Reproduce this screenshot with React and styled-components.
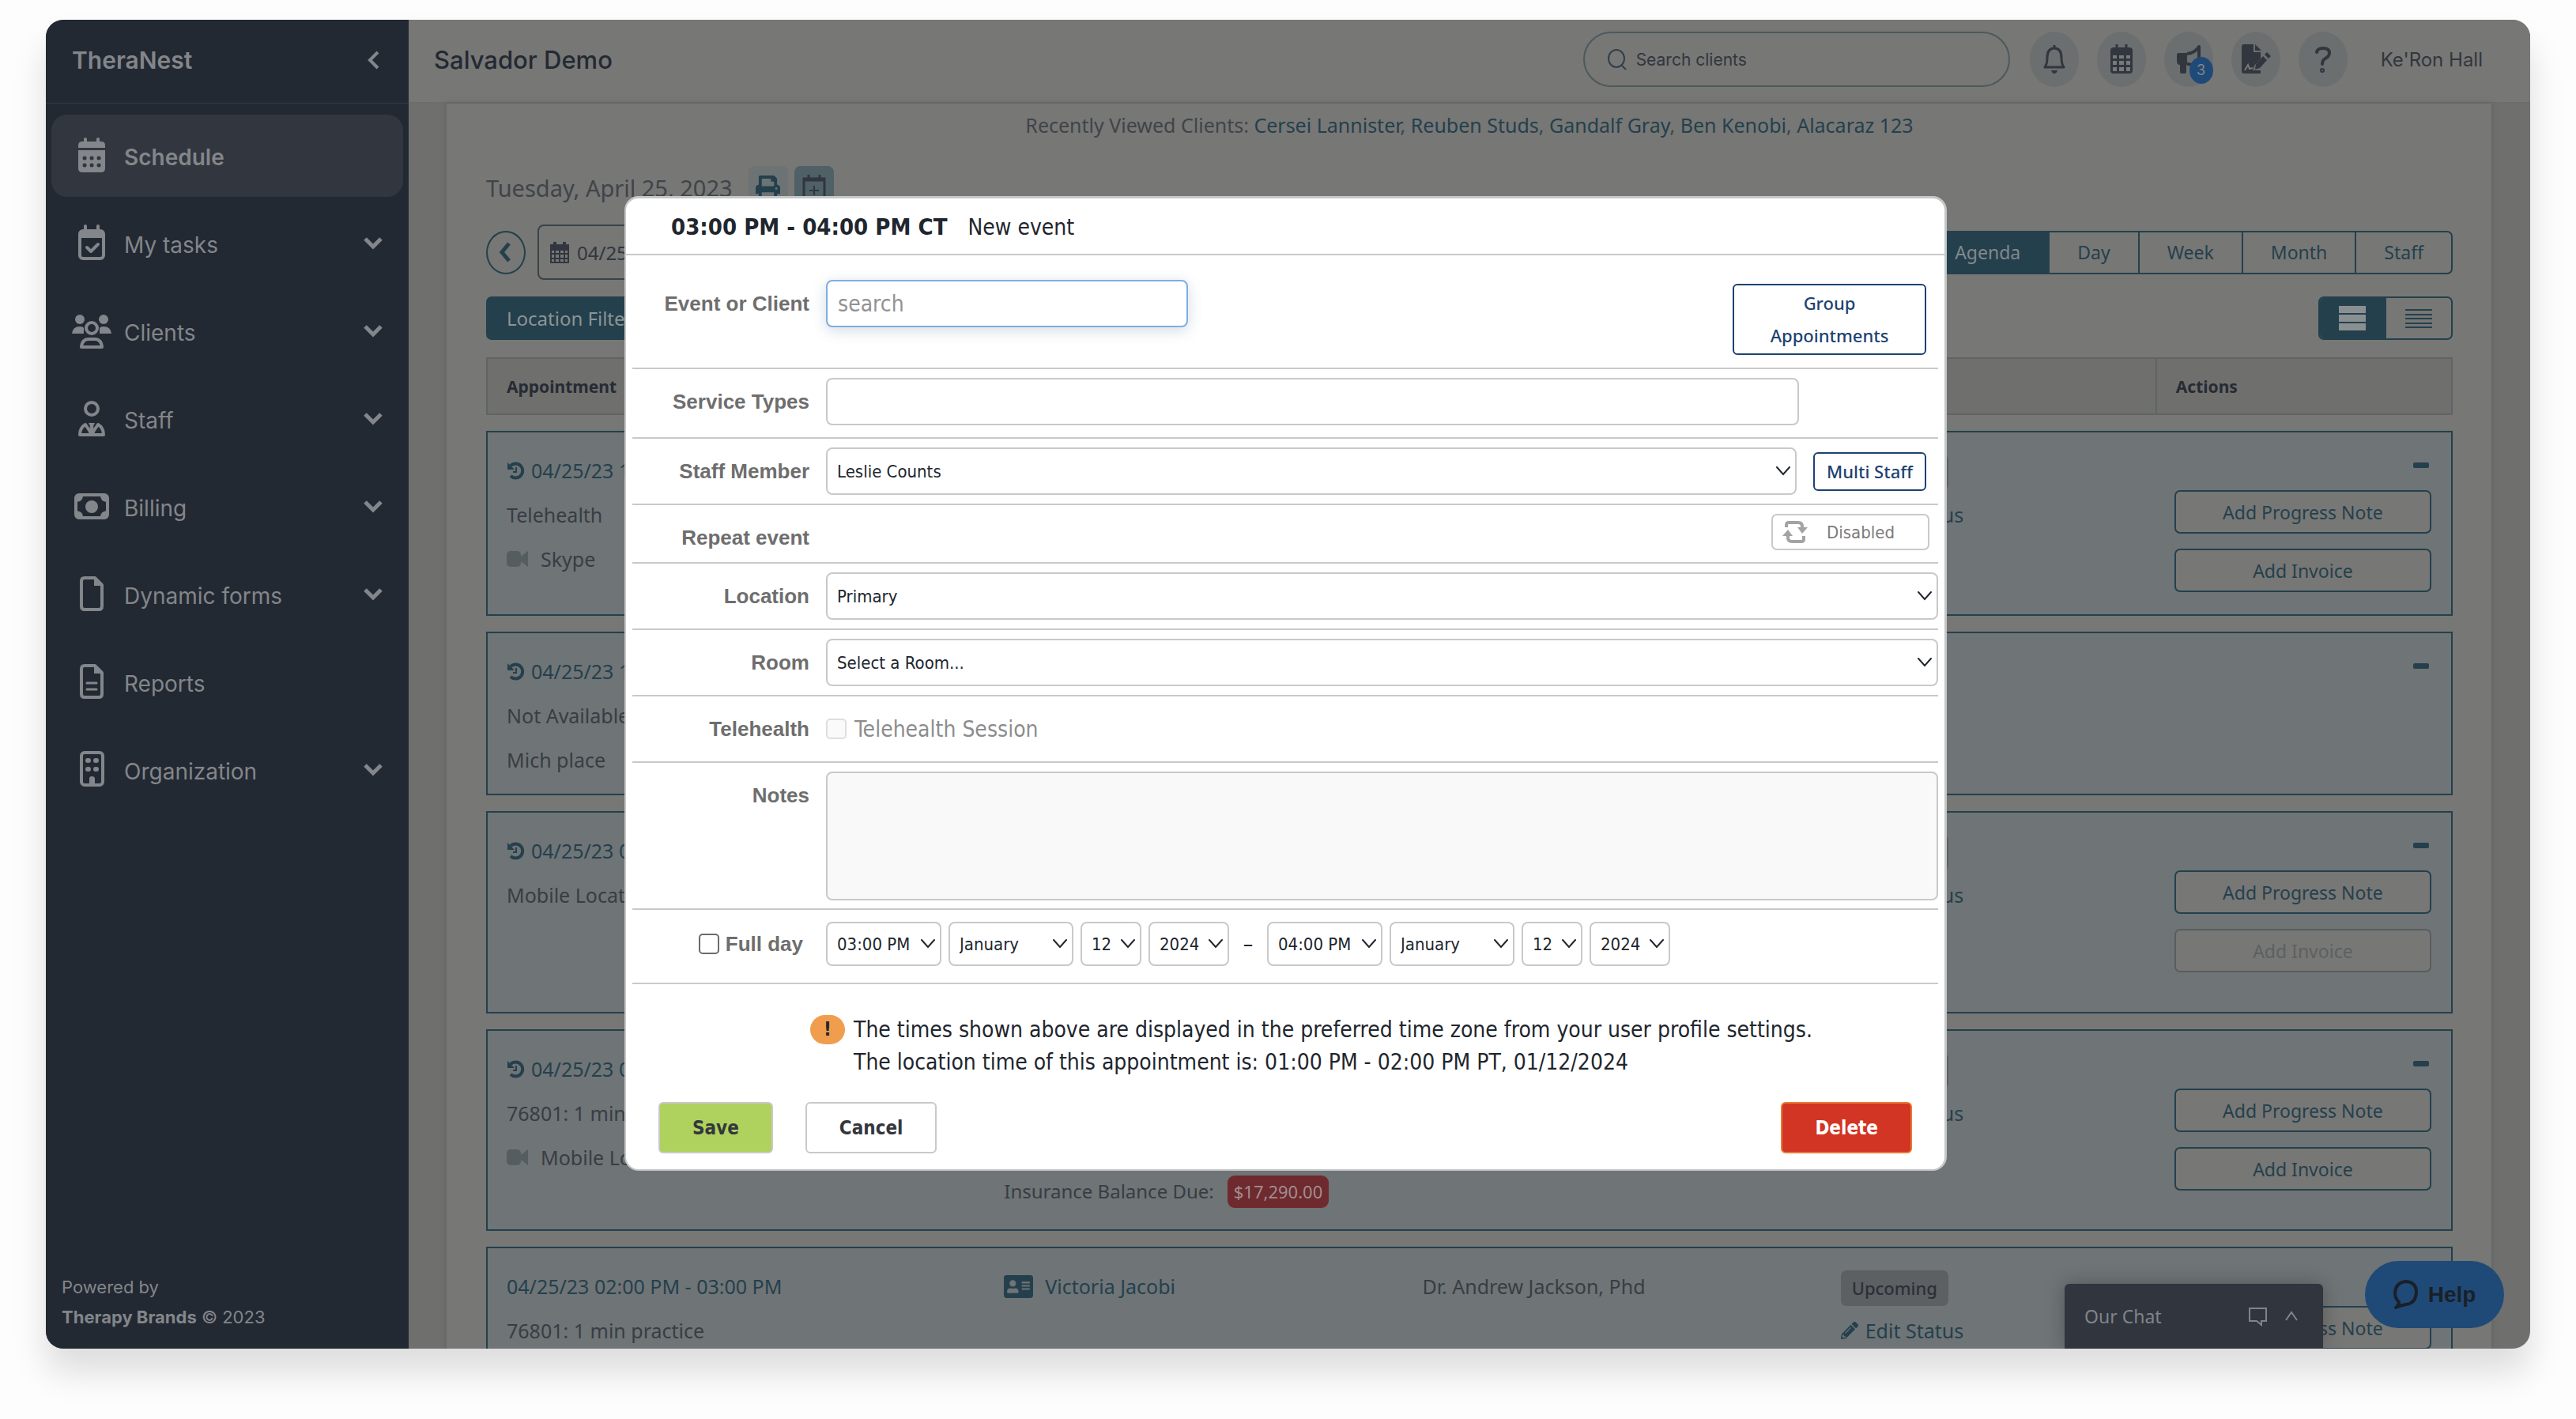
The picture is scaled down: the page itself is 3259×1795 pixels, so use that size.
import styled, { createGlobalStyle } from 'styled-components';
import { FaPrint, FaPencilAlt, FaAddressCard } from 'react-icons/fa';

const GlobalStyle = createGlobalStyle`
    * {
        box-sizing: border-box;
    }
    body {
        margin: 0;
        background: #fdfdfd;
        font-family: 'Noto Sans', 'Open Sans', sans-serif;
        font-size: 24px;
        color: #383d44;
    }
    button, input, select, textarea {
        font-family: inherit;
        font-size: inherit;
        color: inherit;
        margin: 0;
    }
    button {
        cursor: pointer;
    }
    a {
        color: inherit;
        text-decoration: none;
    }
    h1, h2, p {
        margin: 0;
    }
    svg {
        display: block;
        flex: none;
    }
`;

const Page = styled.div`
    min-height: 100vh;
    padding: 25px 58px 89px;
    display: flex;
`;

const AppWindow = styled.div`
    position: relative;
    flex: 1;
    min-width: 0;
    height: calc(100vh - 114px);
    display: flex;
    overflow: hidden;
    border-radius: 22px;
    background: #6f6f6d;
    box-shadow: 0 30px 44px rgba(0, 0, 0, 0.13);
`;

/* sidebar */

const Sidebar = styled.aside`
    flex: none;
    width: 459px;
    display: flex;
    flex-direction: column;
    background: #232933;
    color: #83868a;
    font-family: Inter, sans-serif;
`;

const Brand = styled.div`
    height: 106px;
    padding: 0 37px 4px 33px;
    display: flex;
    align-items: center;
    justify-content: space-between;
    border-bottom: 1px solid #343a44;
    font-size: 30px;
    font-weight: 600;
`;

const CollapseMenu = styled.button`
    padding: 0;
    border: 0;
    background: none;
    display: grid;
    place-items: center;
`;

const Nav = styled.nav`
    padding: 14px 7px 0;
    display: flex;
    flex-direction: column;
    gap: 7px;
`;

const NavItem = styled.a`
    height: 104px;
    padding: 0 26px;
    display: flex;
    align-items: center;
    border-radius: 20px;
    background: ${({ $active }) => ($active ? '#31363f' : 'transparent')};
    font-size: 28px;
    font-weight: ${({ $active }) => ($active ? 600 : 400)};
    span {
        flex: 1;
        margin-left: 16px;
        padding-top: 3px;
    }
`;

const PoweredBy = styled.div`
    margin-top: auto;
    padding: 0 20px 21px;
    font-size: 22px;
    line-height: 38px;
`;

/* header */

const Content = styled.div`
    flex: 1;
    min-width: 0;
    display: flex;
    flex-direction: column;
`;

const Header = styled.header`
    flex: none;
    height: 106px;
    padding: 0 60px 4px 32px;
    display: flex;
    align-items: center;
    background: #777775;
    border-bottom: 2px solid #6d6d6b;
    font-family: Inter, sans-serif;
    color: #31363f;
    h1 {
        margin-right: auto;
        font-size: 31px;
        font-weight: 500;
        color: #232933;
    }
`;

const SearchBox = styled.label`
    width: 540px;
    height: 70px;
    padding: 0 28px;
    display: flex;
    align-items: center;
    gap: 12px;
    border: 2px solid #4d595e;
    border-radius: 35px;
    font-size: 21px;
    input {
        flex: 1;
        min-width: 0;
        padding: 0;
        border: 0;
        outline: 0;
        background: none;
    }
    input::placeholder {
        color: #31363f;
        opacity: 1;
    }
`;

const HeaderIcons = styled.div`
    margin: 0 42px 0 25px;
    display: flex;
    gap: 23px;
`;

const RoundButton = styled.button`
    position: relative;
    width: 62px;
    height: 70px;
    padding: 0;
    border: 0;
    border-radius: 50%;
    background: #6c6f70;
    display: grid;
    place-items: center;
`;

const Badge = styled.span`
    position: absolute;
    right: 0;
    bottom: 4px;
    width: 30px;
    height: 34px;
    border-radius: 50%;
    background: #1f4a78;
    color: #83868a;
    font-size: 18px;
    line-height: 34px;
`;

/* agenda */

const Panel = styled.main`
    flex: 1;
    min-height: 0;
    overflow: hidden;
    margin: 0 49px 0 48px;
    padding: 0 49px 0 50px;
    background: #777775;
    box-shadow: 0 0 6px #5c5f60;
`;

const RecentClients = styled.p`
    text-align: center;
    font-size: 25px;
    line-height: 54px;
    color: #3f444a;
    a {
        color: #24404d;
    }
`;

const DateRow = styled.div`
    margin-top: 25px;
    height: 54px;
    display: flex;
    align-items: center;
    gap: 8px;
    h2 {
        margin-right: 12px;
        font-size: 29px;
        font-weight: 400;
        color: #3f444a;
    }
`;

const SquareButton = styled.button`
    width: 50px;
    height: 54px;
    padding: 0;
    border: 0;
    border-radius: 8px;
    background: ${({ $dark }) => ($dark ? '#4f6067' : '#6d7375')};
    color: ${({ $dark }) => ($dark ? '#31363f' : '#24404d')};
    display: grid;
    place-items: center;
`;

const Controls = styled.div`
    margin-top: ${({ $top }) => $top}px;
    display: flex;
    align-items: center;
    justify-content: space-between;
`;

const DatePicker = styled.div`
    display: flex;
    align-items: center;
    gap: 15px;
`;

const PrevButton = styled.button`
    width: 50px;
    height: 55px;
    padding: 0 4px 0 0;
    border: 2px solid #24404d;
    border-radius: 50%;
    background: none;
    color: #24404d;
    display: grid;
    place-items: center;
`;

const DateField = styled.label`
    width: 240px;
    height: 70px;
    padding: 0 14px;
    display: flex;
    align-items: center;
    gap: 10px;
    border: 2px solid #3a434a;
    border-radius: 8px;
    color: #31363f;
    input {
        width: 160px;
        padding: 0;
        border: 0;
        background: none;
    }
`;

const ButtonGroup = styled.div`
    height: 55px;
    display: flex;
    border: 2px solid #24404d;
    border-radius: 7px;
    overflow: hidden;
    button {
        padding: 0 ${({ $pad }) => $pad}px;
        border: 0;
        border-left: 2px solid #24404d;
        background: none;
        color: #24404d;
        font-size: 23px;
    }
    button:first-child {
        border-left: 0;
    }
    button[aria-pressed='true'] {
        background: #24404d;
        color: #82898b;
    }
`;

const FilterButton = styled.button`
    height: 55px;
    padding: 0 26px;
    border: 0;
    border-radius: 7px;
    background: #24404d;
    color: #8c9496;
    font-size: 24px;
`;

const AgendaTable = styled.table`
    width: 100%;
    margin-top: 2px;
    table-layout: fixed;
    border-collapse: separate;
    border-spacing: 0 20px;
    th {
        height: 73px;
        padding: 0 26px;
        text-align: left;
        font-size: 21px;
        font-weight: 700;
        color: #262b34;
        background: #6f6f6d;
        border: solid #606466;
        border-width: 2px 0;
    }
    th:first-child {
        border-left-width: 2px;
        padding-left: 24px;
    }
    th:last-child {
        border-left-width: 2px;
        border-right-width: 2px;
        padding-left: 24px;
    }
`;

const EventRow = styled.tr`
    height: ${({ $height }) => $height}px;
    td {
        padding: 20px 26px 0;
        vertical-align: top;
        font-size: 25px;
        line-height: 56px;
        background: #6f7476;
        border: solid #24404d;
        border-width: 2px 0;
        white-space: nowrap;
    }
    td:first-child {
        padding-left: 24px;
        border-left-width: 2px;
    }
    td:last-child {
        padding-right: 25px;
        padding-left: 24px;
        border-right-width: 2px;
    }
    td.bottom {
        padding-bottom: 20px;
        vertical-align: bottom;
        font-size: 24px;
    }
`;

const Line = styled.div`
    min-height: 56px;
    display: flex;
    align-items: center;
    gap: ${({ $gap }) => $gap || 9}px;
    color: ${({ $link }) => ($link ? '#24404d' : 'inherit')};
`;

const DueBadge = styled.span`
    height: 41px;
    padding: 0 8px;
    border-radius: 9px;
    background: #6e2a2e;
    color: #a08e8f;
    font-size: 22px;
    line-height: 41px;
`;

const StatusBadge = styled.span`
    height: 45px;
    margin-top: 4px;
    padding: 0 14px;
    border-radius: 7px;
    background: #5c6062;
    color: #2b303a;
    font-size: 22px;
    font-weight: 500;
    line-height: 45px;
`;

const Actions = styled.div`
    display: flex;
    flex-direction: column;
    gap: 19px;
`;

const CollapseButton = styled.button`
    align-self: flex-end;
    width: 20px;
    height: 7px;
    margin: 18px 3px 9px 0;
    padding: 0;
    border: 0;
    border-radius: 2px;
    background: #24404d;
`;

const ActionButton = styled.button`
    height: 55px;
    border: 2px solid #24404d;
    border-radius: 7px;
    background: #777775;
    color: #24404d;
    font-size: 23px;
    &:disabled {
        border-color: #595d5f;
        color: #5c6062;
    }
`;

/* floating widgets */

const ChatBar = styled.button`
    position: absolute;
    right: 262px;
    bottom: 0;
    width: 327px;
    height: 82px;
    padding: 0 32px 0 25px;
    border: 0;
    border-radius: 6px 6px 0 0;
    background: #31353e;
    color: #80848a;
    box-shadow: 0 0 24px rgba(0, 0, 0, 0.25);
    display: flex;
    align-items: center;
    gap: 22px;
    text-align: left;
    font-size: 23px;
    span {
        flex: 1;
    }
`;

const HelpButton = styled.button`
    position: absolute;
    right: 33px;
    bottom: 26px;
    width: 176px;
    height: 85px;
    border: 0;
    border-radius: 43px;
    background: #1f4a78;
    color: #1a2028;
    display: flex;
    align-items: center;
    justify-content: center;
    gap: 13px;
    font-family: 'Liberation Sans', Arial, sans-serif;
    font-size: 28px;
    font-weight: 700;
`;

/* event dialog */

const Overlay = styled.div`
    position: absolute;
    inset: 0;
    display: grid;
    grid-template-columns: 732fr 1673fr 738fr;
    align-items: start;
`;

const Dialog = styled.section`
    grid-column: 2;
    margin-top: 223px;
    border: 3px solid #c6c7c8;
    border-left-width: 2px;
    border-bottom-width: 2px;
    border-radius: 18px;
    background: #fff;
    color: #21262e;
    font-family: 'DejaVu Sans Condensed', 'DejaVu Sans', sans-serif;
    font-size: 28px;
`;

const DialogHeader = styled.header`
    height: 72px;
    padding: 2px 57px 0;
    display: flex;
    align-items: center;
    gap: 26px;
    border-bottom: 2px solid #c9c9c9;
    b {
        font-size: 29px;
    }
`;

const Form = styled.form`
    margin: 0;
`;

const Row = styled.div`
    margin: 0 8px;
    padding: ${({ $top = 11 }) => $top}px 0 ${({ $bottom = 11 }) => $bottom}px;
    display: grid;
    grid-template-columns: 224px 1fr;
    column-gap: 21px;
    border-bottom: 2px solid #c9c9c9;
`;

const RowLabel = styled.label`
    display: flex;
    align-items: center;
    justify-content: flex-end;
    gap: 8px;
    height: 60px;
    padding-right: ${({ $right = 0 }) => $right}px;
    font-family: 'Liberation Sans', Arial, sans-serif;
    font-size: 26px;
    font-weight: 700;
    color: #6e6e6e;
`;

const Field = styled.div`
    min-width: 0;
    min-height: ${({ $min = 60 }) => $min}px;
    display: flex;
    align-items: ${({ $align }) => $align || 'center'};
    justify-content: ${({ $justify }) => $justify || 'flex-start'};
    gap: ${({ $gap = 0 }) => $gap}px;
    padding-right: ${({ $right = 0 }) => $right}px;
`;

const TextInput = styled.input`
    width: ${({ $width }) => $width};
    height: 60px;
    padding: 0 13px;
    border: 2px solid #c9c9c9;
    border-radius: 8px;
    background: #fff;
    outline: 0;
    &[type='search'] {
        border-color: #7faee0;
        box-shadow: 0 4px 18px rgba(60, 90, 130, 0.22);
    }
    &::placeholder {
        color: #929292;
        opacity: 1;
    }
`;

const SelectBox = styled.div`
    position: relative;
    flex: ${({ $width }) => ($width ? 'none' : 1)};
    width: ${({ $width }) => ($width ? `${$width}px` : 'auto')};
    select {
        width: 100%;
        height: ${({ $height }) => $height}px;
        padding: 0 12px;
        appearance: none;
        border: 2px solid #c9c9c9;
        border-radius: 8px;
        background: #fff;
        font-size: 22px;
    }
    svg {
        position: absolute;
        right: 8px;
        top: 50%;
        margin-top: -6px;
        pointer-events: none;
    }
`;

const OutlineButton = styled.button`
    width: ${({ $width }) => $width}px;
    padding: 2px 10px;
    align-self: ${({ $self }) => $self || 'center'};
    border: 2px solid #1d4271;
    border-radius: 6px;
    background: #fff;
    color: #1d4271;
    font-family: 'Noto Sans', sans-serif;
    font-size: 22px;
    font-weight: 500;
    line-height: 41px;
`;

const RepeatButton = styled.button`
    width: 200px;
    height: 46px;
    padding: 0 12px;
    display: flex;
    align-items: center;
    gap: 24px;
    border: 2px solid #c9c9c9;
    border-radius: 7px;
    background: #fff;
    color: #7b7b7b;
    font-size: 22px;
`;

const CheckBox = styled.input`
    appearance: none;
    width: 26px;
    height: 26px;
    margin: 0;
    border: 2px solid #6b6b6b;
    border-radius: 5px;
    background: #fff;
    &:disabled {
        border-color: #dedede;
        background: #fafafa;
    }
`;

const CheckLabel = styled.label`
    color: #8d8d8d;
`;

const NotesArea = styled.textarea`
    width: 100%;
    height: 163px;
    padding: 12px;
    border: 2px solid #c9c9c9;
    border-radius: 8px;
    background: #f9f9f9;
    resize: none;
    display: block;
`;

const Dash = styled.span`
    width: 30px;
    text-align: center;
`;

const Notice = styled.div`
    padding: 37px 40px 0 233px;
    display: flex;
    gap: 11px;
    line-height: 41px;
`;

const Warning = styled.span`
    flex: none;
    width: 44px;
    height: 37px;
    margin-top: 2px;
    border-radius: 19px;
    background: #f09e4e;
    text-align: center;
    font-size: 24px;
    font-weight: 700;
    line-height: 37px;
`;

const DialogFooter = styled.footer`
    padding: 30px 41px 20px 41px;
    display: flex;
    gap: 41px;
`;

const FormButton = styled.button`
    height: 65px;
    padding: 0 41px;
    border: 2px solid ${({ $border }) => $border || '#c9c9c9'};
    border-radius: 6px;
    background: ${({ $bg }) => $bg || '#fff'};
    color: ${({ $color }) => $color || '#33373d'};
    font-size: 24px;
    font-weight: 700;
    &:last-child {
        margin-left: auto;
    }
`;

const ChevronDown = () => (
    <svg width="24" height="18" viewBox="0 0 24 18" fill="none" stroke="currentColor" strokeWidth="5">
        <path d="M2 3 L12 13 L22 3" />
    </svg>
);

const SelectArrow = () => (
    <svg width="18" height="12" viewBox="0 0 18 12" fill="none" stroke="#21262e" strokeWidth="2" strokeLinecap="round">
        <path d="M1 1 L9 10 L17 1" />
    </svg>
);

const HistoryIcon = () => (
    <svg width="22" height="24" viewBox="0 0 22 24" fill="none" stroke="currentColor">
        <path d="M5 6 A9 9 0 1 1 5 19" strokeWidth="4" />
        <path d="M1 2 V11 H10 Z" fill="currentColor" stroke="none" />
        <path d="M12 8 V14 H8" strokeWidth="2" />
    </svg>
);

const VideoIcon = () => (
    <svg width="27" height="22" viewBox="0 0 27 22" fill="#555d61">
        <rect x="0" y="1" width="18" height="20" rx="5" />
        <path d="M14 11 L27 1 V21 Z" />
    </svg>
);

const NavIcon = ({ children }) => (
    <svg width="50" height="48" viewBox="0 0 50 48" fill="none" stroke="currentColor" strokeWidth="4" strokeLinecap="round" strokeLinejoin="round">
        {children}
    </svg>
);

const icons = {
    schedule: (
        <NavIcon>
            <path d="M17 3 V9 M33 3 V9" />
            <path d="M8 14 V11 Q8 6 13 6 H37 Q42 6 42 11 V14 Z" fill="currentColor" stroke="none" />
            <path d="M8 17 H42 V40 Q42 45 37 45 H13 Q8 45 8 40 Z" fill="currentColor" stroke="none" />
            <path d="M16 27 H16.1 M25 27 H25.1 M34 27 H34.1 M16 36 H16.1 M25 36 H25.1 M34 36 H34.1" stroke="#31363f" strokeWidth="5" />
        </NavIcon>
    ),
    tasks: (
        <NavIcon>
            <path d="M17 2 V8 M33 2 V8" />
            <rect x="10" y="8" width="30" height="35" rx="4" />
            <path d="M10 9 H40 V17 H10 Z" fill="currentColor" stroke="none" />
            <path d="M19 29 L24 34 L33 25" />
        </NavIcon>
    ),
    clients: (
        <NavIcon>
            <circle cx="10" cy="9" r="6" fill="currentColor" stroke="none" />
            <circle cx="40" cy="9" r="6" fill="currentColor" stroke="none" />
            <path d="M0 27 Q1 18 10 18 Q14 18 15 20 V27 Z M50 27 Q49 18 40 18 Q36 18 35 20 V27 Z" fill="currentColor" stroke="none" />
            <circle cx="25" cy="20" r="7" />
            <path d="M12 44 Q13 34 21 34 H29 Q37 34 38 44 Z" />
        </NavIcon>
    ),
    staff: (
        <NavIcon>
            <circle cx="25" cy="11" r="8" />
            <path d="M10 44 Q10 35 17 31 L25 43 L33 31 Q40 35 40 44 Z" />
            <path d="M21 29 H29 L27 33 L29 43 H21 L23 33 Z" fill="currentColor" stroke="none" />
        </NavIcon>
    ),
    billing: (
        <NavIcon>
            <rect x="5" y="9" width="40" height="29" rx="4" strokeWidth="4" />
            <path d="M6 10 H14 Q14 17 6 18 Z M44 10 H36 Q36 17 44 18 Z M6 37 H14 Q14 30 6 29 Z M44 37 H36 Q36 30 44 29 Z" fill="currentColor" stroke="none" />
            <circle cx="25" cy="24" r="8" fill="currentColor" stroke="none" />
        </NavIcon>
    ),
    forms: (
        <NavIcon>
            <path d="M12 7 Q12 3 16 3 H29 L38 12 V39 Q38 43 34 43 H16 Q12 43 12 39 Z" />
            <path d="M28 3 V13 H38 Z" fill="currentColor" stroke="none" />
        </NavIcon>
    ),
    reports: (
        <NavIcon>
            <path d="M12 7 Q12 3 16 3 H29 L38 12 V39 Q38 43 34 43 H16 Q12 43 12 39 Z" />
            <path d="M28 3 V13 H38 Z" fill="currentColor" stroke="none" />
            <path d="M19 25 H31 M19 33 H31" strokeWidth="3" />
        </NavIcon>
    ),
    organization: (
        <NavIcon>
            <rect x="12" y="2" width="27" height="41" rx="4" />
            <path d="M20 12 H21 M30 12 H31 M20 23 H21 M30 23 H31" strokeWidth="6" />
            <path d="M22 43 V35 Q22 32 25 32 Q29 32 29 35 V43 Z" fill="currentColor" stroke="none" />
        </NavIcon>
    ),
};

const NAV = [
    { icon: 'schedule', label: 'Schedule', active: true },
    { icon: 'tasks', label: 'My tasks', more: true },
    { icon: 'clients', label: 'Clients', more: true },
    { icon: 'staff', label: 'Staff', more: true },
    { icon: 'billing', label: 'Billing', more: true },
    { icon: 'forms', label: 'Dynamic forms', more: true },
    { icon: 'reports', label: 'Reports' },
    { icon: 'organization', label: 'Organization', more: true },
];

const RECENT = [
    'Cersei Lannister',
    'Reuben Studs',
    'Gandalf Gray',
    'Ben Kenobi',
    'Alacaraz 123',
];

const EVENTS = [
    {
        time: '04/25/23 10:00 AM',
        recurring: true,
        lines: ['Telehealth'],
        video: 'Skype',
        status: true,
        actions: true,
        height: 234,
    },
    {
        time: '04/25/23 11:00 AM',
        recurring: true,
        lines: ['Not Available', 'Mich place'],
        height: 207,
    },
    {
        time: '04/25/23 01:00 PM',
        recurring: true,
        lines: ['Mobile Location'],
        status: true,
        actions: true,
        invoiced: true,
        height: 256,
    },
    {
        time: '04/25/23 01:00 PM',
        recurring: true,
        lines: ['76801: 1 min practice'],
        video: 'Mobile Location',
        due: '$17,290.00',
        status: true,
        actions: true,
        height: 255,
    },
    {
        time: '04/25/23 02:00 PM - 03:00 PM',
        lines: ['76801: 1 min practice'],
        client: 'Victoria Jacobi',
        staff: 'Dr. Andrew Jackson, Phd',
        status: true,
        actions: true,
        height: 255,
    },
];

const SideMenu = () => (
    <Sidebar>
        <Brand>
            TheraNest
            <CollapseMenu aria-label="Collapse menu">
                <svg width="16" height="24" viewBox="0 0 16 24" fill="none" stroke="currentColor" strokeWidth="4">
                    <path d="M14 2 L4 12 L14 22" />
                </svg>
            </CollapseMenu>
        </Brand>
        <Nav>
            {NAV.map(({ icon, label, active, more }) => (
                <NavItem key={label} href="#" $active={active}>
                    {icons[icon]}
                    <span>{label}</span>
                    {more && <ChevronDown />}
                </NavItem>
            ))}
        </Nav>
        <PoweredBy>
            Powered by
            <br />
            <b>Therapy Brands</b> © 2023
        </PoweredBy>
    </Sidebar>
);

const TopBar = () => (
    <Header>
        <h1>Salvador Demo</h1>
        <SearchBox>
            <svg width="25" height="28" viewBox="0 0 25 28" fill="none" stroke="#31404a" strokeWidth="2">
                <ellipse cx="12" cy="13" rx="10" ry="11" />
                <path d="M18 21 L24 27" />
            </svg>
            <input type="text" placeholder="Search clients" aria-label="Search clients" />
        </SearchBox>
        <HeaderIcons>
            <RoundButton aria-label="Notifications">
                <svg width="30" height="38" viewBox="0 0 30 38" fill="none" stroke="#31363f" strokeWidth="3" strokeLinejoin="round">
                    <path d="M15 1 V5 M3 29 Q6 25 6 17 Q6 5 15 5 Q24 5 24 17 Q24 25 27 29 Z" />
                    <path d="M11 33 H19 Q18 37 15 37 Q12 37 11 33 Z" fill="#31363f" stroke="none" />
                </svg>
            </RoundButton>
            <RoundButton aria-label="Calendar">
                <svg width="30" height="38" viewBox="0 0 30 38">
                    <rect x="1" y="4" width="28" height="33" rx="4" fill="#31363f" />
                    <path d="M9 0 V6 M21 0 V6" stroke="#31363f" strokeWidth="3" />
                    <path
                        d="M4 14 h5 v4 h-5z M12 14 h6 v4 h-6z M21 14 h5 v4 h-5z M4 21 h5 v5 h-5z M12 21 h6 v5 h-6z M21 21 h5 v5 h-5z M4 29 h5 v5 h-5z M12 29 h6 v5 h-6z M21 29 h5 v5 h-5z"
                        fill="#777a7a"
                    />
                </svg>
            </RoundButton>
            <RoundButton aria-label="Announcements">
                <svg width="34" height="38" viewBox="0 0 34 38">
                    <path d="M4 11 H15 V26 H14 V35 Q14 37 12 37 H8 Q6 37 6 35 V26 Q2 26 2 21 V14 Q2 11 4 11 Z" fill="#31363f" />
                    <path d="M15 12 Q25 11 30 3 V32 Q24 25 15 25" fill="none" stroke="#31363f" strokeWidth="4" strokeLinejoin="round" />
                </svg>
                <Badge>3</Badge>
            </RoundButton>
            <RoundButton aria-label="Notes">
                <svg width="38" height="38" viewBox="0 0 38 38">
                    <path d="M4 0 H16 V10 H25 V18 L17 27 L15 33 L25 33 V37 H4 Q1 37 1 34 V3 Q1 0 4 0 Z M18 0 L26 8 H18 Z" fill="#31363f" />
                    <path d="M5 33 L9 26 L11 31 L15 30" stroke="#777a7a" strokeWidth="2" fill="none" />
                    <path d="M33 10 L38 15 L35 18 L30 13 Z M28 15 L33 20 L24 30 L18 32 L19 25 Z" fill="#31363f" />
                </svg>
            </RoundButton>
            <RoundButton aria-label="Help">
                <svg width="22" height="34" viewBox="0 0 22 34" fill="none" stroke="#31363f" strokeWidth="4" strokeLinecap="round">
                    <path d="M3 8 Q4 3 11 3 Q19 3 19 9 Q19 13 14 16 Q10 18 10 23" />
                    <circle cx="10" cy="31" r="1" />
                </svg>
            </RoundButton>
        </HeaderIcons>
        <a href="#">Ke'Ron Hall</a>
    </Header>
);

const EventItem = ({ event }) => (
    <EventRow $height={event.height}>
        <td>
            <Line $link>
                {event.recurring && <HistoryIcon />}
                <a href="#">{event.time}</a>
            </Line>
            {event.lines.map((line) => (
                <Line key={line}>{line}</Line>
            ))}
            {event.video && (
                <Line $gap={16}>
                    <VideoIcon />
                    {event.video}
                </Line>
            )}
        </td>
        <td className={event.due ? 'bottom' : undefined}>
            {event.client && (
                <Line $link $gap={15}>
                    <FaAddressCard size={37} />
                    <a href="#">{event.client}</a>
                </Line>
            )}
            {event.due && (
                <Line $gap={17}>
                    Insurance Balance Due: <DueBadge>{event.due}</DueBadge>
                </Line>
            )}
        </td>
        <td>{event.staff}</td>
        <td>
            {event.status && (
                <>
                    <Line>
                        <StatusBadge>Upcoming</StatusBadge>
                    </Line>
                    <Line $link>
                        <FaPencilAlt size={22} />
                        <a href="#">Edit Status</a>
                    </Line>
                </>
            )}
        </td>
        <td>
            <Actions>
                <CollapseButton aria-label="Collapse" />
                {event.actions && (
                    <>
                        <ActionButton>Add Progress Note</ActionButton>
                        <ActionButton disabled={event.invoiced}>Add Invoice</ActionButton>
                    </>
                )}
            </Actions>
        </td>
    </EventRow>
);

const Agenda = () => (
    <Panel>
        <RecentClients>
            Recently Viewed Clients:{' '}
            {RECENT.map((name, idx) => (
                <span key={name}>
                    {idx > 0 && ', '}
                    <a href="#">{name}</a>
                </span>
            ))}
        </RecentClients>

        <DateRow>
            <h2>Tuesday, April 25, 2023</h2>
            <SquareButton aria-label="Print">
                <FaPrint size={31} />
            </SquareButton>
            <SquareButton $dark aria-label="Add to calendar">
                <svg width="30" height="34" viewBox="0 0 30 34" fill="none" stroke="currentColor" strokeWidth="3">
                    <path d="M2 6 H28 V32 H2 Z M2 8 H28 M8 1 V8 M22 1 V8" />
                    <path d="M15 15 V27 M9 21 H21" strokeWidth="2" />
                </svg>
            </SquareButton>
        </DateRow>

        <Controls $top={20}>
            <DatePicker>
                <PrevButton aria-label="Previous day">
                    <svg width="15" height="26" viewBox="0 0 15 26" fill="none" stroke="currentColor" strokeWidth="5">
                        <path d="M13 2 L4 13 L13 24" />
                    </svg>
                </PrevButton>
                <DateField>
                    <svg width="24" height="28" viewBox="0 0 24 28" fill="none" stroke="currentColor" strokeWidth="2">
                        <path d="M1 5 H23 V27 H1 Z M1 11 H23 M1 16 H23 M1 22 H23 M6 11 V27 M12 11 V27 M18 11 V27" />
                        <path d="M1 5 H23 V10 H1 Z" fill="currentColor" />
                        <path d="M6 1 V7 M18 1 V7" strokeWidth="4" />
                    </svg>
                    <input type="text" defaultValue="04/25/2023" aria-label="Date" />
                </DateField>
            </DatePicker>
            <ButtonGroup $pad={35}>
                <button aria-pressed="true">Agenda</button>
                <button>Day</button>
                <button>Week</button>
                <button>Month</button>
                <button>Staff</button>
            </ButtonGroup>
        </Controls>

        <Controls $top={21}>
            <FilterButton>Location Filter</FilterButton>
            <ButtonGroup $pad={24}>
                <button aria-pressed="true" aria-label="Card view">
                    <svg width="34" height="34" viewBox="0 0 34 34" fill="#8a9092">
                        <path d="M0 1 H34 V10 H0 Z M0 12 H34 V21 H0 Z M0 23 H34 V32 H0 Z" />
                    </svg>
                </button>
                <button aria-label="List view">
                    <svg width="34" height="34" viewBox="0 0 34 34" stroke="#24404d" strokeWidth="2">
                        <path d="M0 6 H34 M0 12 H34 M0 17 H34 M0 23 H34 M0 28 H34" />
                    </svg>
                </button>
            </ButtonGroup>
        </Controls>

        <AgendaTable>
            <colgroup>
                <col style={{ width: `${(629 / 2487) * 100}%` }} />
                <col style={{ width: `${(529 / 2487) * 100}%` }} />
                <col style={{ width: `${(529 / 2487) * 100}%` }} />
                <col style={{ width: `${(424 / 2487) * 100}%` }} />
                <col />
            </colgroup>
            <thead>
                <tr>
                    <th>Appointment</th>
                    <th>Client</th>
                    <th>Staff</th>
                    <th>Status</th>
                    <th>Actions</th>
                </tr>
            </thead>
            <tbody>
                {EVENTS.map((event, idx) => (
                    <EventItem key={`event-${idx}`} event={event} />
                ))}
            </tbody>
        </AgendaTable>
    </Panel>
);

const Select = ({ id, label, value, width, height = 60 }) => (
    <SelectBox $width={width} $height={height}>
        <select id={id} aria-label={label} defaultValue={value}>
            <option>{value}</option>
        </select>
        <SelectArrow />
    </SelectBox>
);

const DateTime = ({ name, time }) => (
    <>
        <Select label={`${name} time`} value={time} width={146} height={56} />
        <Select label={`${name} month`} value="January" width={158} height={56} />
        <Select label={`${name} day`} value="12" width={77} height={56} />
        <Select label={`${name} year`} value="2024" width={102} height={56} />
    </>
);

const EventDialog = () => (
    <Overlay>
        <Dialog role="dialog" aria-label="New event">
            <DialogHeader>
                <b>03:00 PM - 04:00 PM CT</b>
                <span>New event</span>
            </DialogHeader>
            <Form onSubmit={(e) => e.preventDefault()}>
                <Row $top={31} $bottom={16}>
                    <RowLabel htmlFor="client">Event or Client</RowLabel>
                    <Field $min={95} $align="flex-start" $justify="space-between" $right={15}>
                        <TextInput id="client" type="search" placeholder="search" $width="458px" />
                        <OutlineButton type="button" $width={245} $self="flex-end">
                            Group
                            <br />
                            Appointments
                        </OutlineButton>
                    </Field>
                </Row>
                <Row $top={11} $bottom={15}>
                    <RowLabel htmlFor="service">Service Types</RowLabel>
                    <Field $right={176}>
                        <TextInput id="service" type="text" $width="100%" />
                    </Field>
                </Row>
                <Row>
                    <RowLabel htmlFor="staff">Staff Member</RowLabel>
                    <Field $gap={21} $right={15}>
                        <Select id="staff" value="Leslie Counts" />
                        <OutlineButton type="button" $width={143}>
                            Multi Staff
                        </OutlineButton>
                    </Field>
                </Row>
                <Row $bottom={1}>
                    <RowLabel htmlFor="repeat">Repeat event</RowLabel>
                    <Field $align="flex-start" $justify="flex-end" $right={11}>
                        <RepeatButton id="repeat" type="button">
                            <svg width="32" height="30" viewBox="0 0 32 30" fill="none" stroke="#a3a3a3" strokeWidth="4">
                                <path d="M5 9 V6 Q5 3 8 3 H20 Q25 3 25 8 V11 M27 20 V24 Q27 27 24 27 H12 Q7 27 7 22 V19" />
                                <path d="M19 9 H32 L25 17 Z M0 20 H13 L7 12 Z" fill="#a3a3a3" stroke="none" />
                            </svg>
                            Disabled
                        </RepeatButton>
                    </Field>
                </Row>
                <Row>
                    <RowLabel htmlFor="location">Location</RowLabel>
                    <Field>
                        <Select id="location" value="Primary" />
                    </Field>
                </Row>
                <Row>
                    <RowLabel htmlFor="room">Room</RowLabel>
                    <Field>
                        <Select id="room" value="Select a Room..." />
                    </Field>
                </Row>
                <Row>
                    <RowLabel as="span">Telehealth</RowLabel>
                    <Field $gap={10}>
                        <CheckBox id="telehealth" type="checkbox" disabled />
                        <CheckLabel htmlFor="telehealth">Telehealth Session</CheckLabel>
                    </Field>
                </Row>
                <Row $bottom={10}>
                    <RowLabel htmlFor="notes">Notes</RowLabel>
                    <Field>
                        <NotesArea id="notes" />
                    </Field>
                </Row>
                <Row $top={13} $bottom={19}>
                    <RowLabel $right={8}>
                        <CheckBox type="checkbox" />
                        Full day
                    </RowLabel>
                    <Field $gap={9}>
                        <DateTime name="Start" time="03:00 PM" />
                        <Dash>–</Dash>
                        <DateTime name="End" time="04:00 PM" />
                    </Field>
                </Row>
                <Notice>
                    <Warning>!</Warning>
                    <p>
                        The times shown above are displayed in the preferred time zone from your
                        user profile settings.
                        <br />
                        The location time of this appointment is: 01:00 PM - 02:00 PM PT, 01/12/2024
                    </p>
                </Notice>
                <DialogFooter>
                    <FormButton type="submit" $bg="#afd25f">
                        Save
                    </FormButton>
                    <FormButton type="button">Cancel</FormButton>
                    <FormButton type="button" $bg="#d23523" $border="#e87a35" $color="#fff">
                        Delete
                    </FormButton>
                </DialogFooter>
            </Form>
        </Dialog>
    </Overlay>
);

const App = () => {
    return (
        <Page>
            <GlobalStyle />
            <AppWindow>
                <SideMenu />
                <Content>
                    <TopBar />
                    <Agenda />
                </Content>
                <ChatBar>
                    <span>Our Chat</span>
                    <svg width="25" height="25" viewBox="0 0 25 25" fill="none" stroke="currentColor" strokeWidth="2">
                        <path d="M2 2 H23 V18 H17 V23 L11 18 H2 Z" />
                    </svg>
                    <svg width="16" height="14" viewBox="0 0 16 14" fill="none" stroke="currentColor" strokeWidth="2">
                        <path d="M1 12 L8 2 L15 12" />
                    </svg>
                </ChatBar>
                <HelpButton>
                    <svg width="31" height="37" viewBox="0 0 31 37" fill="none" stroke="currentColor" strokeWidth="4" strokeLinejoin="round">
                        <path d="M7 28 Q2 24 2 16 Q3 3 16 2 Q29 3 29 16 Q28 30 16 31 Q10 32 3 35 Q7 32 7 28 Z" />
                    </svg>
                    Help
                </HelpButton>
                <EventDialog />
            </AppWindow>
        </Page>
    );
};

export default App;
